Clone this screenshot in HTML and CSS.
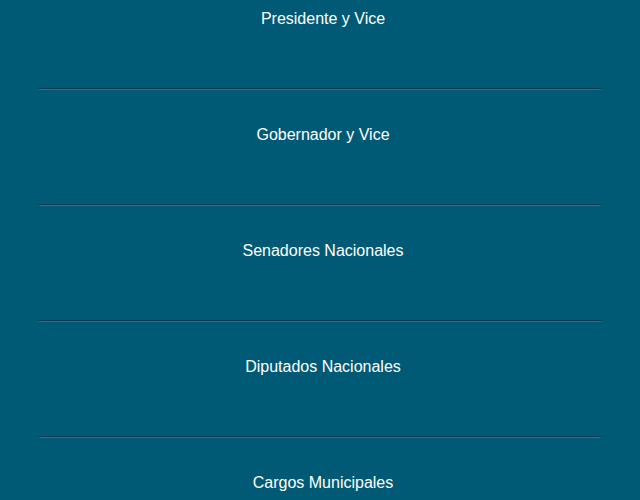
FILE: index.html
```html
<!DOCTYPE html>
<html lang="es">
<head>
<meta charset="utf-8">
<link rel="stylesheet" href="styles.css">
</head>
<body>
<ul class="menu">
  <li class="item"><span class="label">Presidente y Vice</span><hr class="sep"></li>
  <li class="item"><span class="label">Gobernador y Vice</span><hr class="sep"></li>
  <li class="item"><span class="label">Senadores Nacionales</span><hr class="sep"></li>
  <li class="item"><span class="label">Diputados Nacionales</span><hr class="sep"></li>
  <li class="item"><span class="label">Cargos Municipales</span><hr class="sep"></li>
</ul>
</body>
</html>
```
FILE: styles.css
```css
html, body {
  margin: 0;
  padding: 0;
  background: #015a75;
  height: 100%;
  overflow: hidden;
}
.menu {
  list-style: none;
  margin: 0;
  padding: 10px 0 0;
  font-family: "Liberation Sans", Arial, sans-serif;
  font-size: 16px;
  color: #ffffff;
}
.item {
  display: flex;
  flex-direction: column;
  align-items: center;
}
.label {
  display: block;
  line-height: 18px;
  padding-left: 6px;
}
.sep {
  width: 562px;
  margin: 60px 0 36px;
  height: 0;
  border: 0;
  border-top: 1px solid #013a50;
  border-bottom: 1px solid #1b7893;
}
```
